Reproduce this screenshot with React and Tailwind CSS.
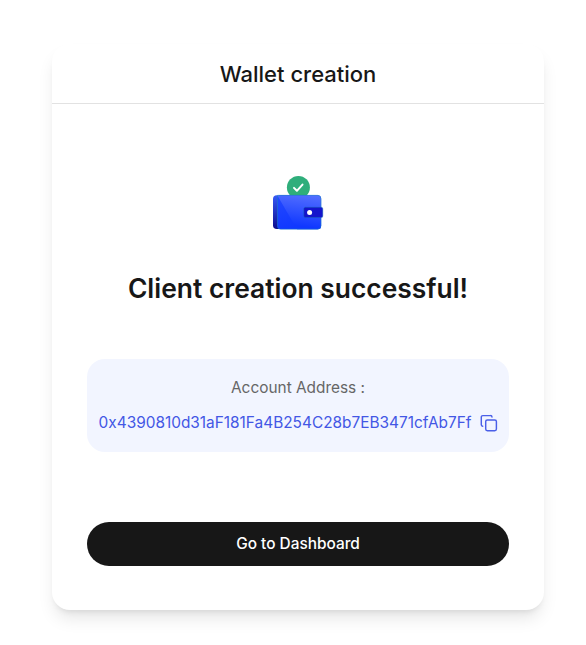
function WalletIcon() {
  return (
    <svg width="52" height="56" viewBox="272 175 52 56" fill="none">
      <defs>
        <linearGradient id="front" x1="281" y1="196" x2="290" y2="229" gradientUnits="userSpaceOnUse">
          <stop stopColor="#2348ff" />
          <stop offset="1" stopColor="#1038ff" />
        </linearGradient>
        <linearGradient id="shine" x1="303" y1="193" x2="299" y2="226" gradientUnits="userSpaceOnUse">
          <stop stopColor="#5570ff" />
          <stop offset="1" stopColor="#1038ff" />
        </linearGradient>
        <linearGradient id="back" x1="275" y1="196" x2="277" y2="229" gradientUnits="userSpaceOnUse">
          <stop stopColor="#3558f5" />
          <stop offset="1" stopColor="#0b0b8c" />
        </linearGradient>
      </defs>
      <circle cx="298.4" cy="187.5" r="11.5" fill="#2fae7b" />
      <path d="M294 187.9l2.9 2.9 5.6-6.2" stroke="#fff" strokeWidth="2" strokeLinecap="round" strokeLinejoin="round" />
      <rect x="273" y="195.3" width="20" height="33.7" rx="3.8" fill="url(#back)" />
      <rect x="277.3" y="195.3" width="43.8" height="33.9" rx="3.5" fill="url(#front)" />
      <path d="M277.8 196.3l1.2-1h38.6a3.5 3.5 0 0 1 3.5 3.5v26.9a3.5 3.5 0 0 1-3.5 3.5H297Z" fill="url(#shine)" />
      <path d="M321 207.5v-8.7a3.5 3.5 0 0 0-3.5-3.5H277.5v31a2.9 2.9 0 0 0 2.9 2.9h37.1a3.5 3.5 0 0 0 3.5-3.5v-8.1" stroke="#168bb7" strokeWidth=".45" />
      <rect x="303.8" y="207.3" width="19" height="10.2" rx="1.5" fill="#1414cc" stroke="#1478a8" strokeWidth=".4" />
      <circle cx="309.6" cy="212.4" r="2.5" fill="#fff" />
    </svg>
  );
}

function CopyIcon() {
  return (
    <svg className="h-[18px] w-[18px] shrink-0" viewBox="0 0 18 18" fill="none" stroke="#4a5fe8" strokeWidth="1.45" strokeLinecap="round" strokeLinejoin="round">
      <rect x="5.7" y="6" width="10.7" height="10.7" rx="1.6" />
      <path d="M2.7 12.3a1.5 1.5 0 0 1-1.4-1.5V3.1a1.5 1.5 0 0 1 1.5-1.5h7.7a1.5 1.5 0 0 1 1.5 1.4" />
    </svg>
  );
}

export default function App() {
  return (
    <main className="h-[645px] w-[586px] bg-white pl-[52px] pt-[44px] font-['Inter',sans-serif] text-[#171717]">
      <section className="flex h-[566px] w-[492px] flex-col rounded-[18px] bg-white shadow-[0_11px_16.5px_-3.3px_rgba(0,0,0,0.1),0_4.4px_6.6px_-4.4px_rgba(0,0,0,0.1)]">
        <header className="flex h-[60px] shrink-0 items-center justify-center border-b border-[#e2e2e2]">
          <h1 className="text-[22px] leading-[30px] font-medium">Wallet creation</h1>
        </header>
        <div className="flex flex-col items-center px-[35px] pt-[71px]">
          <WalletIcon />
          <h2 className="mt-[39px] whitespace-nowrap text-[26.4px] leading-[36px] font-semibold">Client creation successful!</h2>
          <div className="mt-[53px] flex h-[93px] w-full flex-col items-center rounded-[18px] bg-[#f2f5ff] pt-[17px] text-[15.4px] leading-[24px]">
            <p className="text-[#666666]">Account Address :</p>
            <div className="mt-[11px] flex items-center gap-[9px] whitespace-nowrap pl-px text-[#4357e5]">
              <span>0x4390810d31aF181Fa4B254C28b7EB3471cfAb7Ff</span>
              <button aria-label="Copy address"><CopyIcon /></button>
            </div>
          </div>
          <button className="mt-[70px] h-[44px] w-full rounded-full bg-[#171717] text-[15.4px] font-medium text-white">Go to Dashboard</button>
        </div>
      </section>
    </main>
  );
}
